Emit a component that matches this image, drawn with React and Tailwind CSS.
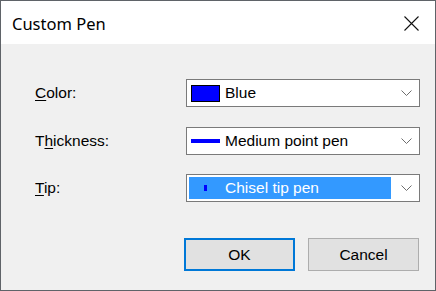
import { useState } from 'react'

const sans = { fontFamily: '"Liberation Sans", Arial, sans-serif' }

function Chevron() {
  return (
    <svg width="11" height="6" viewBox="0 0 11 6" className="shrink-0">
      <polyline points="0.5,0.5 5.5,5.5 10.5,0.5" fill="none" stroke="#6d6d6d" strokeWidth="1" />
    </svg>
  )
}

function Combo({ children, selected }) {
  return (
    <div className="w-[234px] h-[28px] border border-[#7a7a7a] bg-white flex items-center pr-[7px]">
      {selected ? (
        <div className="flex-1 h-full p-[2px]">
          <div className="h-full w-[202px] bg-[#3399ff] flex items-center text-white">{children}</div>
        </div>
      ) : (
        <div className="flex-1 flex items-center pl-[4px]">{children}</div>
      )}
      <Chevron />
    </div>
  )
}

function Label({ pre, u, post }) {
  return (
    <div className="w-[151px] text-[15.5px] text-black leading-none">
      {pre}<span className="underline underline-offset-[2px]">{u}</span>{post}
    </div>
  )
}

export default function App() {
  const [color] = useState('Blue')

  return (
    <div className="w-[436px] h-[291px] border border-[#5f6368] bg-[#f0f0f0] flex flex-col" style={sans}>
      {/* title bar */}
      <div className="h-[43px] bg-white flex items-center justify-between pl-[11px] pr-[16px]">
        <span className="mt-[4px] text-[16.5px] text-black" style={{ fontFamily: '"Noto Sans", "Open Sans", sans-serif' }}>
          Custom Pen
        </span>
        <svg width="15" height="15" viewBox="0 0 15 15" className="mt-[1px]">
          <path d="M0.5 0.5 L14.5 14.5 M14.5 0.5 L0.5 14.5" stroke="#111" strokeWidth="1.1" />
        </svg>
      </div>

      <div className="flex-1 pl-[34px] pt-[35px]">
        <div className="flex items-center">
          <Label pre="" u="C" post="olor:" />
          <Combo>
            <div className="w-[29px] h-[17px] bg-[#0000ff] border border-black" />
            <span className="ml-[5px] text-[15.5px] text-black">{color}</span>
          </Combo>
        </div>

        <div className="flex items-center mt-[20px]">
          <Label pre="T" u="h" post="ickness:" />
          <Combo>
            <div className="w-[29px] h-[4px] bg-[#0000ff]" />
            <span className="ml-[5px] text-[15.5px] text-black">Medium point pen</span>
          </Combo>
        </div>

        <div className="flex items-center mt-[19px]">
          <Label pre="" u="T" post="ip:" />
          <Combo selected>
            <div className="ml-[15px] w-[3px] h-[6px] bg-[#0000ff]" />
            <span className="ml-[18px] text-[15.5px]">Chisel tip pen</span>
          </Combo>
        </div>

        <div className="flex gap-[13px] mt-[36px] ml-[149px]">
          <button className="w-[111px] h-[33px] bg-[#e1e1e1] border-2 border-[#0078d7] text-[15.5px] text-black">
            OK
          </button>
          <button className="w-[111px] h-[33px] bg-[#e1e1e1] border border-[#adadad] text-[15.5px] text-black">
            Cancel
          </button>
        </div>
      </div>
    </div>
  )
}
